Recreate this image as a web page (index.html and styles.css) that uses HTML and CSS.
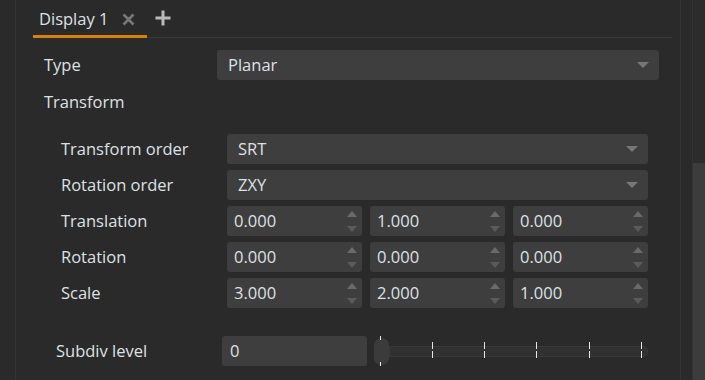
FILE: index.html
```html
<!doctype html>
<html>
	<head>
		<title>Display settings</title>
		<meta name="viewport" content="width=device-width, initial-scale=1.0">
		<link rel="stylesheet" href="styles.css">
	</head>
	<body>

		<div class="panel">

			<!--	Tab bar	-->
			<div class="tabbar">
				<div class="tab">
					<span class="tabName">Display 1</span>
					<svg class="tabClose" width="13" height="13" viewBox="0 0 13 13">
						<path d="M1.5 1.5 L11.5 11.5 M11.5 1.5 L1.5 11.5" stroke="#767676" stroke-width="2.8"/>
					</svg>
				</div>
				<svg class="tabAdd" width="16" height="16" viewBox="0 0 16 16">
					<path d="M8 0.5 V15.5 M0.5 8 H15.5" stroke="#b9b9b9" stroke-width="3"/>
				</svg>
			</div>

			<div class="row topRow">
				<span class="label">Type</span>
				<div class="combo wide">
					<span>Planar</span>
					<i class="caret"></i>
				</div>
			</div>

			<div class="row heading">
				<span class="label">Transform</span>
			</div>

			<!--	Transform group	-->
			<div class="group">
				<div class="row">
					<span class="label">Transform order</span>
					<div class="combo"><span>SRT</span><i class="caret"></i></div>
				</div>
				<div class="row">
					<span class="label">Rotation order</span>
					<div class="combo"><span>ZXY</span><i class="caret"></i></div>
				</div>
				<div class="row">
					<span class="label">Translation</span>
					<div class="spins">
						<div class="spin"><span>0.000</span><i class="arrows"></i></div>
						<div class="spin"><span>1.000</span><i class="arrows"></i></div>
						<div class="spin"><span>0.000</span><i class="arrows"></i></div>
					</div>
				</div>
				<div class="row">
					<span class="label">Rotation</span>
					<div class="spins">
						<div class="spin"><span>0.000</span><i class="arrows"></i></div>
						<div class="spin"><span>0.000</span><i class="arrows"></i></div>
						<div class="spin"><span>0.000</span><i class="arrows"></i></div>
					</div>
				</div>
				<div class="row">
					<span class="label">Scale</span>
					<div class="spins">
						<div class="spin"><span>3.000</span><i class="arrows"></i></div>
						<div class="spin"><span>2.000</span><i class="arrows"></i></div>
						<div class="spin"><span>1.000</span><i class="arrows"></i></div>
					</div>
				</div>
			</div>

			<!--	Subdivision	-->
			<div class="row subdiv">
				<span class="label">Subdiv level</span>
				<div class="field"><span>0</span></div>
				<div class="slider">
					<div class="handle"></div>
					<div class="track"></div>
					<i class="tick" style="left: 6px"></i>
					<i class="tick" style="left: 58px"></i>
					<i class="tick" style="left: 110px"></i>
					<i class="tick" style="left: 162px"></i>
					<i class="tick" style="left: 215px"></i>
					<i class="tick" style="left: 267px"></i>
				</div>
			</div>

		</div>

		<div class="gap"></div>

		<div class="scrollbar">
			<div class="thumb"></div>
		</div>

	</body>
</html>
```

FILE: styles.css
```css
html, body {
	margin: 0; padding: 0;
	width: 705px;
	height: 380px;
	overflow: hidden;
	background-color: #2a2a2a;
	font-family: "Open Sans", "Noto Sans", sans-serif;
	font-size: 16.5px;
	color: #dde1e4;
}

body {
	display: flex;
}

.panel {
	margin-left: 15px;
	width: 665px;
	border-left: 1px solid #333333;
	border-right: 1px solid #333333;
	display: flex;
	flex-direction: column;
}

.gap {
	width: 11px;
}

.scrollbar {
	width: 12px;
	border-left: 1px solid #333333;
	display: flex;
	flex-direction: column;
	padding-top: 163px;
	background-color: #2c2c2c;
}

.thumb {
	flex: 1;
	background-color: #3c3c3c;
}

/*	Tabs	*/
.tabbar {
	height: 37px;
	margin-left: 17px;
	margin-right: 8px;
	border-bottom: 1px solid #383838;
	display: flex;
	align-items: flex-end;
}

.tab {
	display: flex;
	align-items: center;
	height: 35px;
	padding: 0 12px 0 6px;
	border-bottom: 3px solid #d5800f;
	margin-bottom: -1px;
	box-sizing: border-box;
}

.tabName {
	margin-right: 14px;
	padding-bottom: 2px;
}

.tabClose {
	margin-top: 1px;
}

.tabAdd {
	align-self: center;
	margin-left: 8px;
	margin-bottom: 1px;
}

/*	Rows	*/
.row {
	display: flex;
	align-items: center;
	height: 30px;
}

.label {
	flex: none;
	padding-bottom: 2px;
}

.topRow {
	margin-top: 12px;
	padding-left: 28px;
}

.topRow .label {
	width: 173px;
}

.heading {
	margin-top: 7px;
	padding-left: 28px;
}

.group {
	margin-top: 17px;
	padding-left: 45px;
	display: flex;
	flex-direction: column;
	gap: 6px;
}

.group .label {
	width: 166px;
}

.combo, .spin, .field {
	height: 30px;
	box-sizing: border-box;
	background-color: #3e3e3e;
	border-radius: 3px;
	display: flex;
	align-items: center;
	padding-left: 11px;
}

.combo span, .spin span, .field span {
	padding-bottom: 2px;
}

.combo {
	width: 421px;
	justify-content: space-between;
	padding-right: 10px;
}

.combo.wide {
	width: 442px;
}

.caret {
	width: 0; height: 0;
	border-left: 6px solid transparent;
	border-right: 6px solid transparent;
	border-top: 6px solid #777777;
}

.spins {
	display: flex;
	gap: 8px;
}

.spin {
	width: 135px;
	justify-content: space-between;
	padding-left: 7px;
	padding-right: 5px;
}

.arrows {
	width: 11px;
	height: 24px;
	display: flex;
	flex-direction: column;
	justify-content: space-between;
	align-items: center;
}

.arrows::before, .arrows::after {
	content: "";
	width: 0; height: 0;
	border-left: 5.5px solid transparent;
	border-right: 5.5px solid transparent;
}

.arrows::before {
	border-bottom: 6px solid #6a6a6a;
	margin-top: 2px;
}

.arrows::after {
	border-top: 6px solid #5a5a5a;
	margin-bottom: 1px;
}

/*	Subdiv slider	*/
.subdiv {
	margin-top: 28px;
	padding-left: 40px;
}

.subdiv .label {
	width: 166px;
}

.field {
	width: 145px;
	padding-left: 8px;
}

.slider {
	position: relative;
	margin-left: 7px;
	width: 274px;
	height: 30px;
	display: flex;
	align-items: center;
}

.handle {
	width: 15px;
	height: 27px;
	border-radius: 7px;
	background-color: #3b3b3b;
	flex: none;
}

.track {
	flex: 1;
	height: 9px;
	background-color: #313131;
	border: 1px solid #393939;
	border-radius: 0 5px 5px 0;
}

.tick {
	position: absolute;
	top: 6px;
	width: 1px;
	height: 16px;
	background: linear-gradient(#e6e6e6 0 45%, transparent 45% 55%, #e6e6e6 55%);
}

.tick:first-of-type {
	top: 0;
	height: 30px;
	background: linear-gradient(#e6e6e6 0 12%, transparent 12% 88%, #e6e6e6 88%);
}
```
